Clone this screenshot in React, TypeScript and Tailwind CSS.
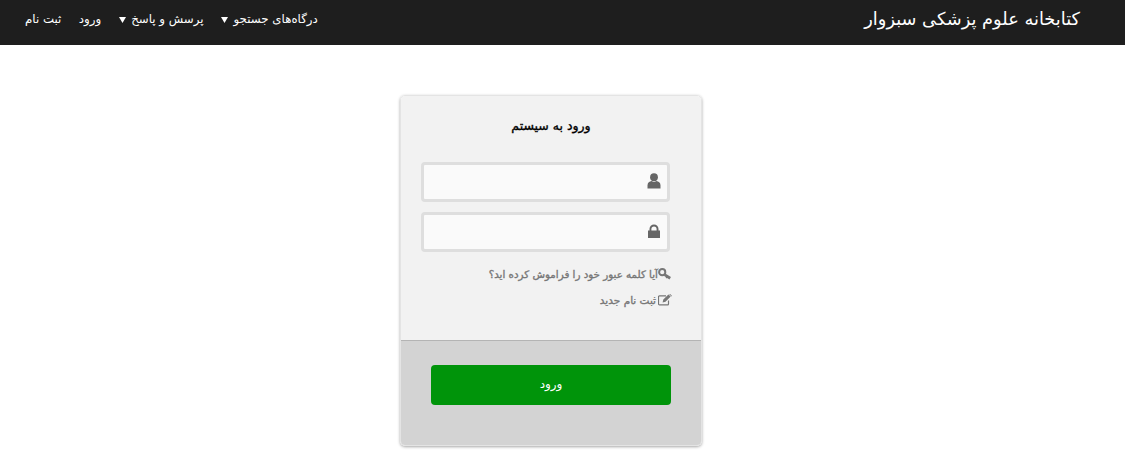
const font = "font-['DejaVu_Sans',sans-serif]"
const heavy = '[-webkit-text-stroke:0.35px_currentColor]'

function Caret() {
  return (
    <svg className="w-[7px] h-[6px]" viewBox="0 0 7 6">
      <path d="M0 0h7L3.5 6z" fill="#fff" />
    </svg>
  )
}

function UserIcon() {
  return (
    <svg className="w-[14px] h-[16px] mb-[2px]" viewBox="0 0 14 16" fill="#666">
      <circle cx="7" cy="4.2" r="3.9" />
      <path d="M0.5 15.5v-3.2c0-2.4 2-4 4-4.2 1.3.9 3.7.9 5 0 2 .2 4 1.8 4 4.2v3.2z" />
    </svg>
  )
}

function LockIcon() {
  return (
    <svg className="w-[12px] h-[14px] mb-[3px]" viewBox="0 0 12 14" fill="#666">
      <path d="M0 6.5h1.5V5a4.5 4.5 0 0 1 9 0v1.5H12V14H0zM3.4 6.5h5.2V5a2.6 2.6 0 0 0-5.2 0z" fillRule="evenodd" />
    </svg>
  )
}

function KeyIcon() {
  return (
    <svg className="w-[13px] h-[12px]" viewBox="0 0 13 12" fill="none" stroke="#777">
      <circle cx="4.2" cy="4.2" r="3.1" strokeWidth="2" />
      <path d="M6.6 6.6l5.6 3.6" strokeWidth="2.8" />
      <path d="M9.4 8.2l-1.1 2" strokeWidth="1.6" />
    </svg>
  )
}

function EditIcon() {
  return (
    <svg className="w-[14px] h-[12px] -mr-[1px] ml-[2px]" viewBox="0 0 14 12">
      <path d="M10.5 6.5v3.4a.9.9 0 0 1-.9.9H1.4a.9.9 0 0 1-.9-.9V2.8a.9.9 0 0 1 .9-.9H8" fill="none" stroke="#777" strokeWidth="1.2" />
      <path d="M4.6 8.4l.7-2.9L10.4.4l2.3 2.2-5.2 5.1zM11.2.1l.9-.1 1.8 1.7-.5.9z" fill="#777" />
    </svg>
  )
}

export default function App() {
  return (
    <div dir="rtl" className={`min-h-[471px] bg-white ${font}`}>
      <header className="h-[45px] bg-[#1e1e1e] flex items-center justify-between pr-[45px] pl-[25px] text-white">
        <a className="text-[17.8px] leading-none pb-[7px]">کتابخانه علوم پزشکی سبزوار</a>
        <nav className="flex items-center gap-[17.5px] text-[11.8px] pb-[6px]">
          <a className="flex items-center gap-[5.5px]">درگاه‌های جستجو <Caret /></a>
          <a className="flex items-center gap-[5.5px]">پرسش و پاسخ <Caret /></a>
          <a>ورود</a>
          <a>ثبت نام</a>
        </nav>
      </header>

      <main className="w-[302px] mr-[423px] mt-[50px] rounded-[5px] overflow-hidden border border-[#e4e4e4] shadow-[0_1px_3px_rgba(0,0,0,0.35)]">
        <div className="bg-[#f2f2f2] h-[244px] pt-[20px] px-[30px] flex flex-col">
          <h1 className={`text-[12.5px] text-black text-center leading-[20px] ${heavy}`}>ورود به سیستم</h1>
          <div className="mt-[26px] mr-[1px]">
            <div className="h-[40px] w-[249px] border-[3px] border-[#dedede] rounded-[4px] bg-[#fafafa] flex items-center pr-[6px]">
              <UserIcon />
            </div>
            <div className="mt-[10px] h-[40px] w-[249px] border-[3px] border-[#dedede] rounded-[4px] bg-[#fafafa] flex items-center pr-[7px]">
              <LockIcon />
            </div>
          </div>
          <a className={`mt-[12px] flex items-center text-[10.3px] text-[#777] leading-[20px] ${heavy}`}>
            <KeyIcon />
            آیا کلمه عبور خود را فراموش کرده اید؟
          </a>
          <a className={`mt-[6px] flex items-center text-[10.5px] text-[#777] leading-[20px] ${heavy}`}>
            <EditIcon />
            ثبت نام جدید
          </a>
        </div>
        <div className="bg-[#d3d3d3] border-t border-[#b4b4b4] h-[105px] pt-[23px] px-[30px]">
          <button className="w-[240px] h-[40px] mt-[1px] bg-[#00940a] rounded-[4px] text-white text-[12px] pb-[2px]">ورود</button>
        </div>
      </main>
    </div>
  )
}
